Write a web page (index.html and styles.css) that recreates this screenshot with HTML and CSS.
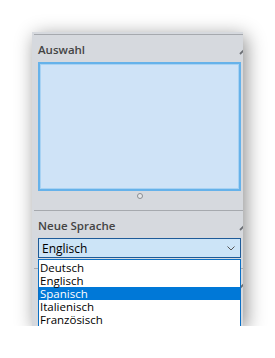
FILE: index.html
```html
<!DOCTYPE html>
<html>
<head>
<meta charset="utf-8">
<link rel="stylesheet" href="styles.css">
</head>
<body>
<div class="pane">
  <section class="section">
    <div class="head"><span class="title">Auswahl</span>
      <svg class="pin" width="8" height="8" viewBox="0 0 8 8"><path d="M1 7 L7 1" stroke="#6b6e73" stroke-width="1.8"/></svg>
    </div>
    <div class="box"></div>
    <div class="grip"><span class="dot"></span></div>
  </section>
  <section class="section">
    <div class="head"><span class="title">Neue Sprache</span>
      <svg class="pin" width="8" height="8" viewBox="0 0 8 8"><path d="M1 7 L7 1" stroke="#6b6e73" stroke-width="1.8"/></svg>
    </div>
    <div class="select"><span>Englisch</span>
      <svg width="8" height="5" viewBox="0 0 8 5"><path d="M0.5 0.5 L4 4 L7.5 0.5" fill="none" stroke="#555" stroke-width="1"/></svg>
    </div>
  </section>
  <section class="section next">
    <div class="head"><span class="title"></span>
      <svg class="pin" width="8" height="8" viewBox="0 0 8 8"><path d="M1 7 L7 1" stroke="#6b6e73" stroke-width="1.8"/></svg>
    </div>
  </section>
  <ul class="list">
    <li>Deutsch</li>
    <li>Englisch</li>
    <li class="sel">Spanisch</li>
    <li>Italienisch</li>
    <li>Französisch</li>
  </ul>
</div>
</body>
</html>
```
FILE: styles.css
```css
html, body {
  margin: 0;
  background: #ffffff;
}
body {
  padding: 32px 0 0 32px;
  font-family: "Open Sans", "Noto Sans", sans-serif;
}
.pane {
  position: relative;
  width: 211px;
  height: 294px;
  background: #d6d9de;
  overflow: hidden;
  box-shadow: 3px 4px 18px rgba(0, 0, 0, 0.45);
  padding-top: 2px;
  box-sizing: border-box;
}
.section {
  margin-left: 2px;
  border-top: 1px solid #a6a9ae;
  display: flex;
  flex-direction: column;
}
.head {
  height: 27px;
  display: flex;
  align-items: flex-start;
  justify-content: space-between;
  padding: 7px 0 0 4px;
  box-sizing: border-box;
}
.title {
  font-size: 11.5px;
  font-weight: 600;
  color: #444444;
  line-height: 16px;
}
.pin {
  margin-top: 5px;
  margin-right: -4px;
}
.box {
  margin-left: 4px;
  width: 203px;
  height: 129px;
  box-sizing: border-box;
  background: #cfe3f7;
  border: 2px solid #66b2ea;
  box-shadow: inset 0 0 0 1px #a8d2f3;
}
.grip {
  height: 19px;
  display: flex;
  justify-content: center;
  padding-top: 2px;
  box-sizing: border-box;
  margin-left: 4px;
  width: 203px;
}
.dot {
  width: 6px;
  height: 6px;
  border-radius: 50%;
  border: 1px solid #8a8d91;
  background: #e8e9eb;
  box-sizing: border-box;
}
.select {
  margin-left: 4px;
  width: 203px;
  height: 20px;
  box-sizing: border-box;
  border: 1px solid #1e5b98;
  background: #cce4f7;
  display: flex;
  align-items: center;
  justify-content: space-between;
  padding: 0 5px 0 3px;
  font-size: 12px;
  color: #000;
  margin-bottom: 10px;
}
.list {
  position: absolute;
  left: 6px;
  top: 227px;
  width: 203px;
  margin: 0;
  padding: 1px 0 0 0;
  list-style: none;
  background: #ffffff;
  border: 1px solid #0a6fc4;
  box-sizing: border-box;
  height: 80px;
}
.list li {
  height: 13px;
  line-height: 13px;
  font-size: 11.5px;
  padding-left: 1px;
  color: #000;
}
.list li.sel {
  background: #0078d7;
  color: #ffffff;
}
```
